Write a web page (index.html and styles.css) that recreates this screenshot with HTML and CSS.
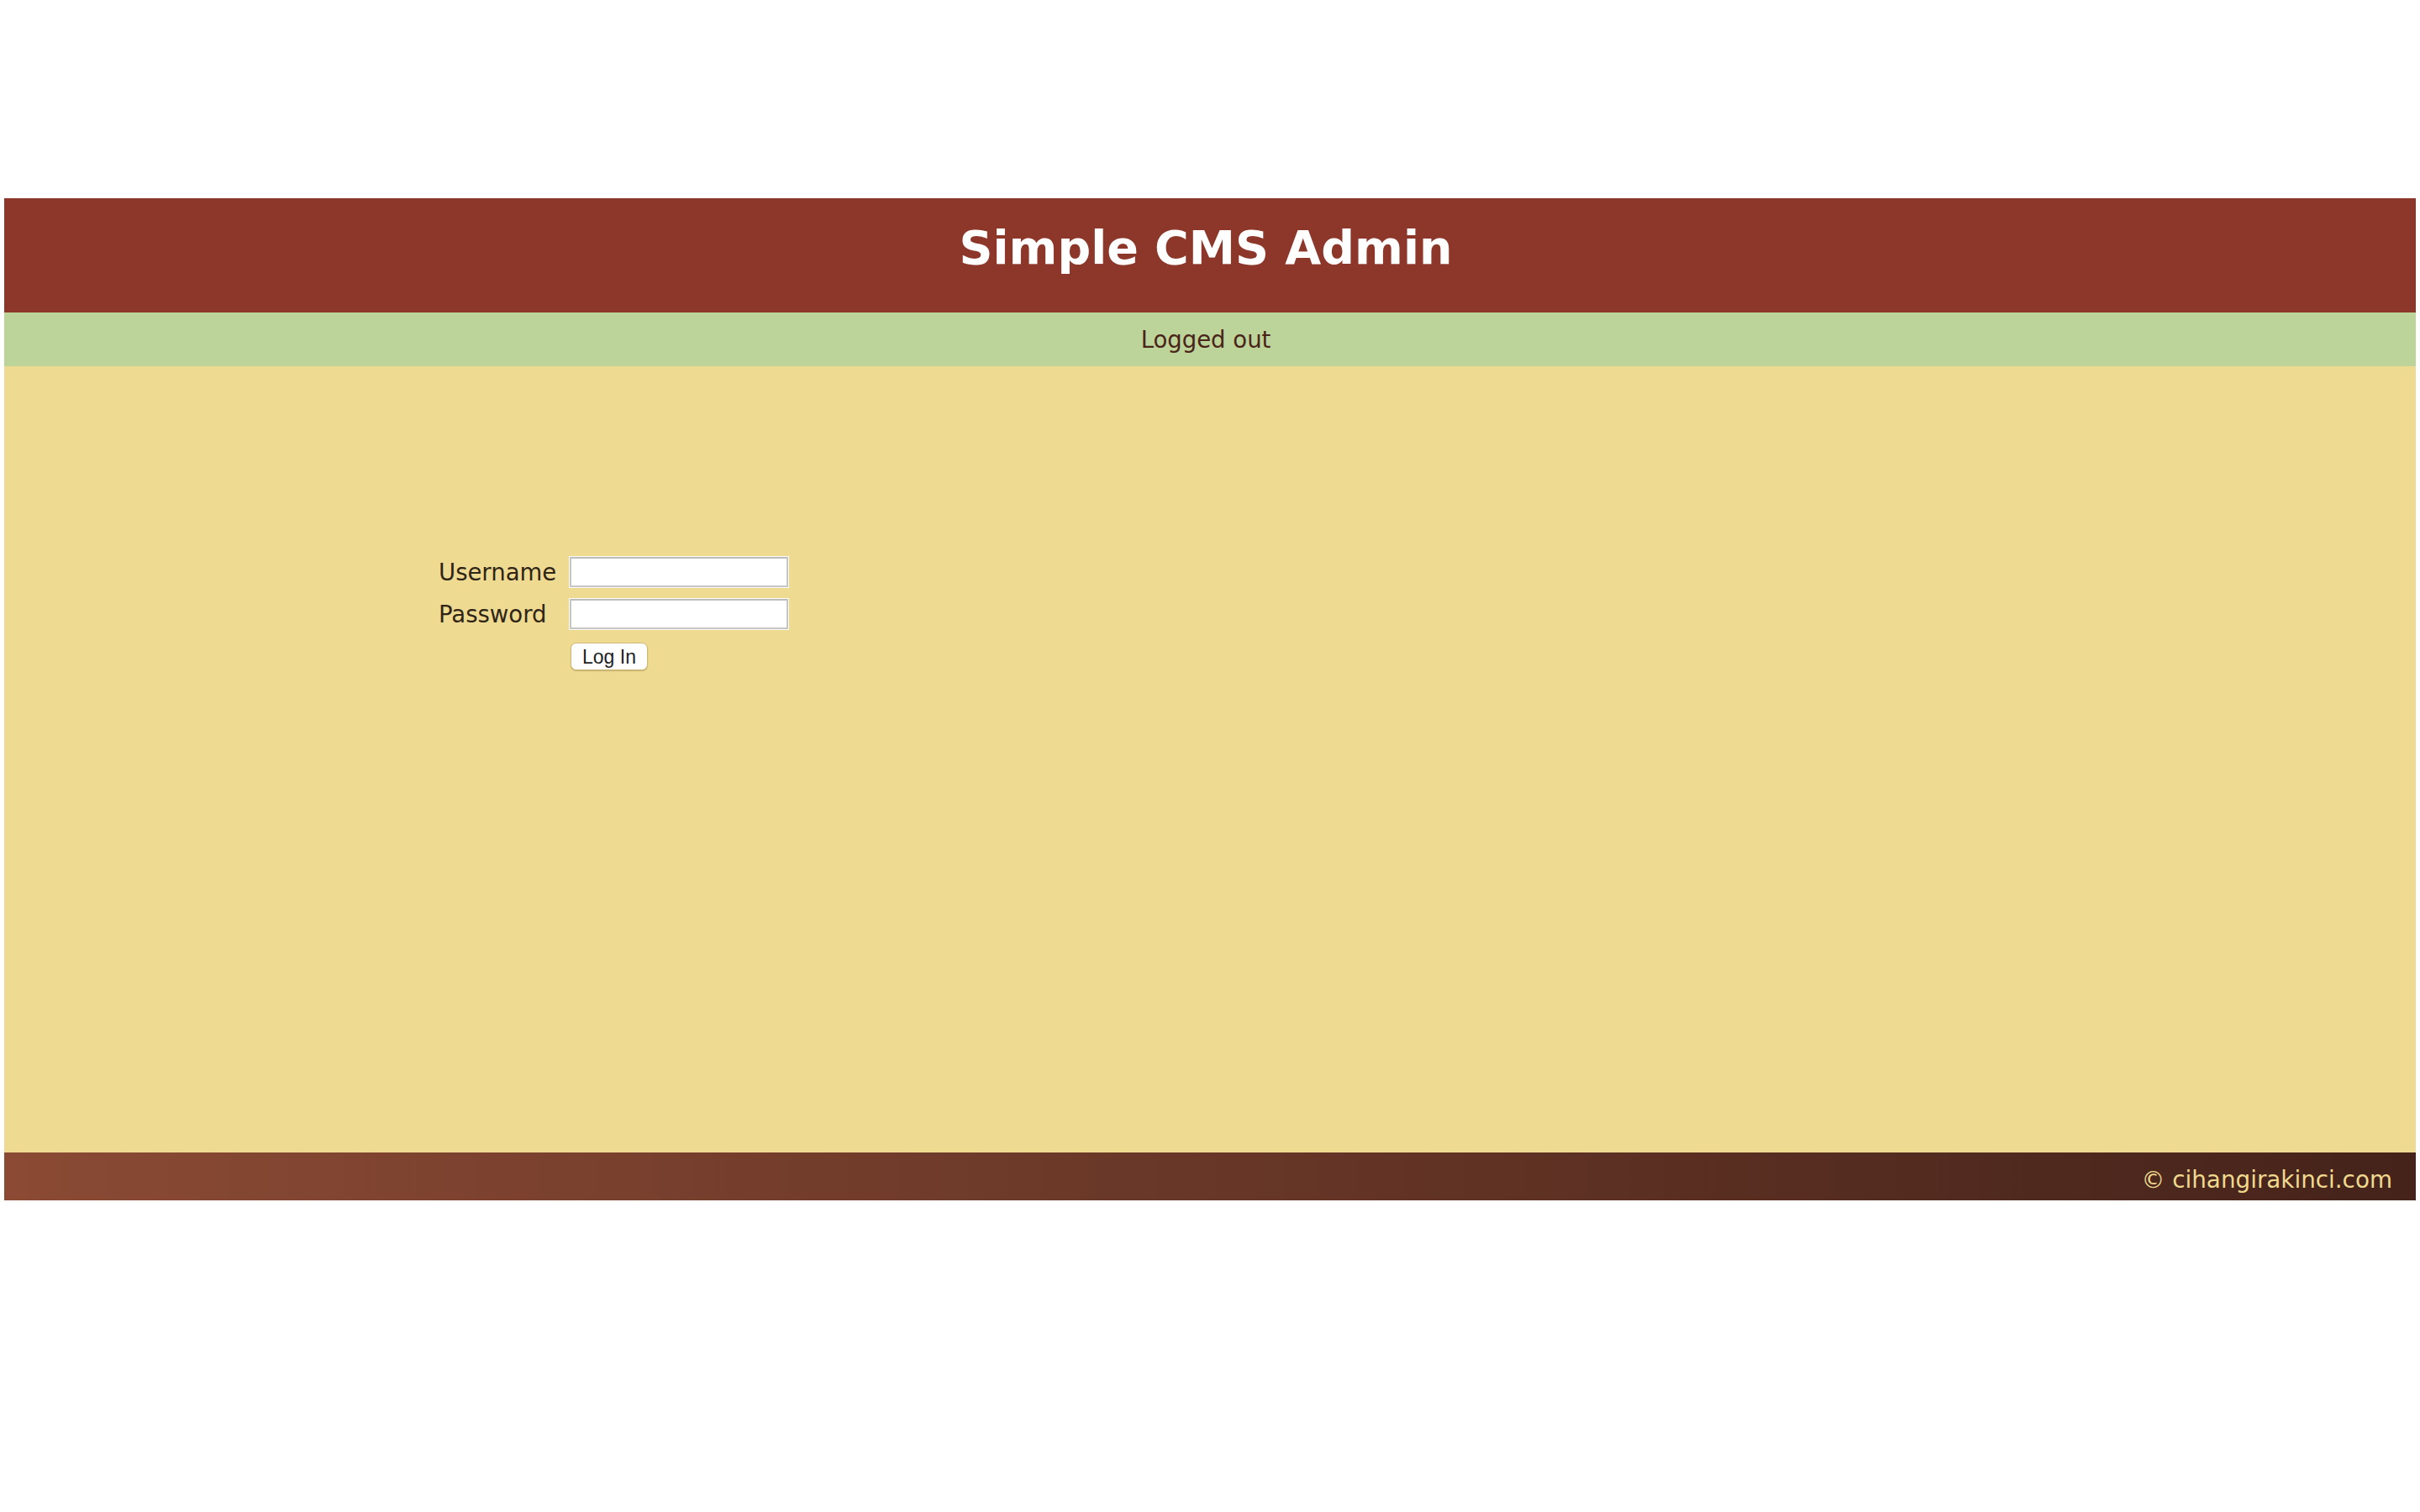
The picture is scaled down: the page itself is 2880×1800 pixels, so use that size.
FILE: index.html
```html
<!DOCTYPE html>
<html lang="en">
<head>
<meta charset="utf-8">
<title>Simple CMS Admin</title>
<link rel="stylesheet" href="styles.css">
</head>
<body>
<div class="page">
  <header class="site-header">
    <h1 class="site-title">Simple CMS Admin</h1>
  </header>
  <div class="status-bar">Logged out</div>
  <main class="content">
    <form class="login-form">
      <label class="field-label" for="username">Username</label>
      <input class="field-input" id="username" type="text">
      <label class="field-label" for="password">Password</label>
      <input class="field-input" id="password" type="password">
      <span class="spacer"></span>
      <button class="login-button" type="button">Log In</button>
    </form>
  </main>
  <footer class="site-footer">© cihangirakinci.com</footer>
</div>
</body>
</html>
```

FILE: styles.css
```css
html, body {
  margin: 0;
  padding: 0;
  background: #ffffff;
}

body {
  font-family: "DejaVu Sans", Verdana, sans-serif;
  font-size: 27.5px;
}

.page {
  padding: 236px 5px 0 5px;
}

.site-header {
  background: #8c3729;
  height: 136px;
  box-sizing: border-box;
  padding: 27px 10px 0 0;
  text-align: center;
}

.site-title {
  margin: 0;
  font-size: 55.5px;
  line-height: 64px;
  font-weight: bold;
  color: #ffffff;
}

.status-bar {
  background: #bcd39a;
  height: 64px;
  box-sizing: border-box;
  padding-right: 10px;
  display: flex;
  align-items: center;
  justify-content: center;
  color: #4a2418;
}

.content {
  background: #efda92;
  height: 936px;
  box-sizing: border-box;
  padding: 227px 0 0 517px;
}

.login-form {
  display: grid;
  grid-template-columns: 156px 260px;
  row-gap: 14px;
  align-items: center;
}

.login-form .spacer {
  display: block;
}

.field-label {
  color: #2f2517;
  line-height: 32px;
}

.field-input {
  box-sizing: border-box;
  width: 260px;
  height: 36px;
  margin: 0;
  background: #ffffff;
  border: 2px solid #c6c6c6;
  border-top-color: #bcbcbc;
  outline: 1px solid #fbfbf7;
  padding: 0 4px;
}

.login-button {
  justify-self: start;
  margin: 2px 0 0 1px;
  width: 92px;
  height: 33px;
  box-sizing: border-box;
  background: #ffffff;
  border: 1px solid #cdb97c;
  border-radius: 7px;
  box-shadow: 0 1px 1px rgba(120, 95, 30, 0.35);
  font-family: "Liberation Sans", Arial, sans-serif;
  font-size: 23px;
  color: #1e1e1e;
  padding: 2px 0 0 0;
  line-height: 29px;
}

.site-footer {
  height: 57px;
  box-sizing: border-box;
  padding: 17px 28px 0 0;
  text-align: right;
  line-height: 32px;
  font-size: 27.8px;
  color: #efd98f;
  background: linear-gradient(to right, #8a4a34, #45231a);
}
```
